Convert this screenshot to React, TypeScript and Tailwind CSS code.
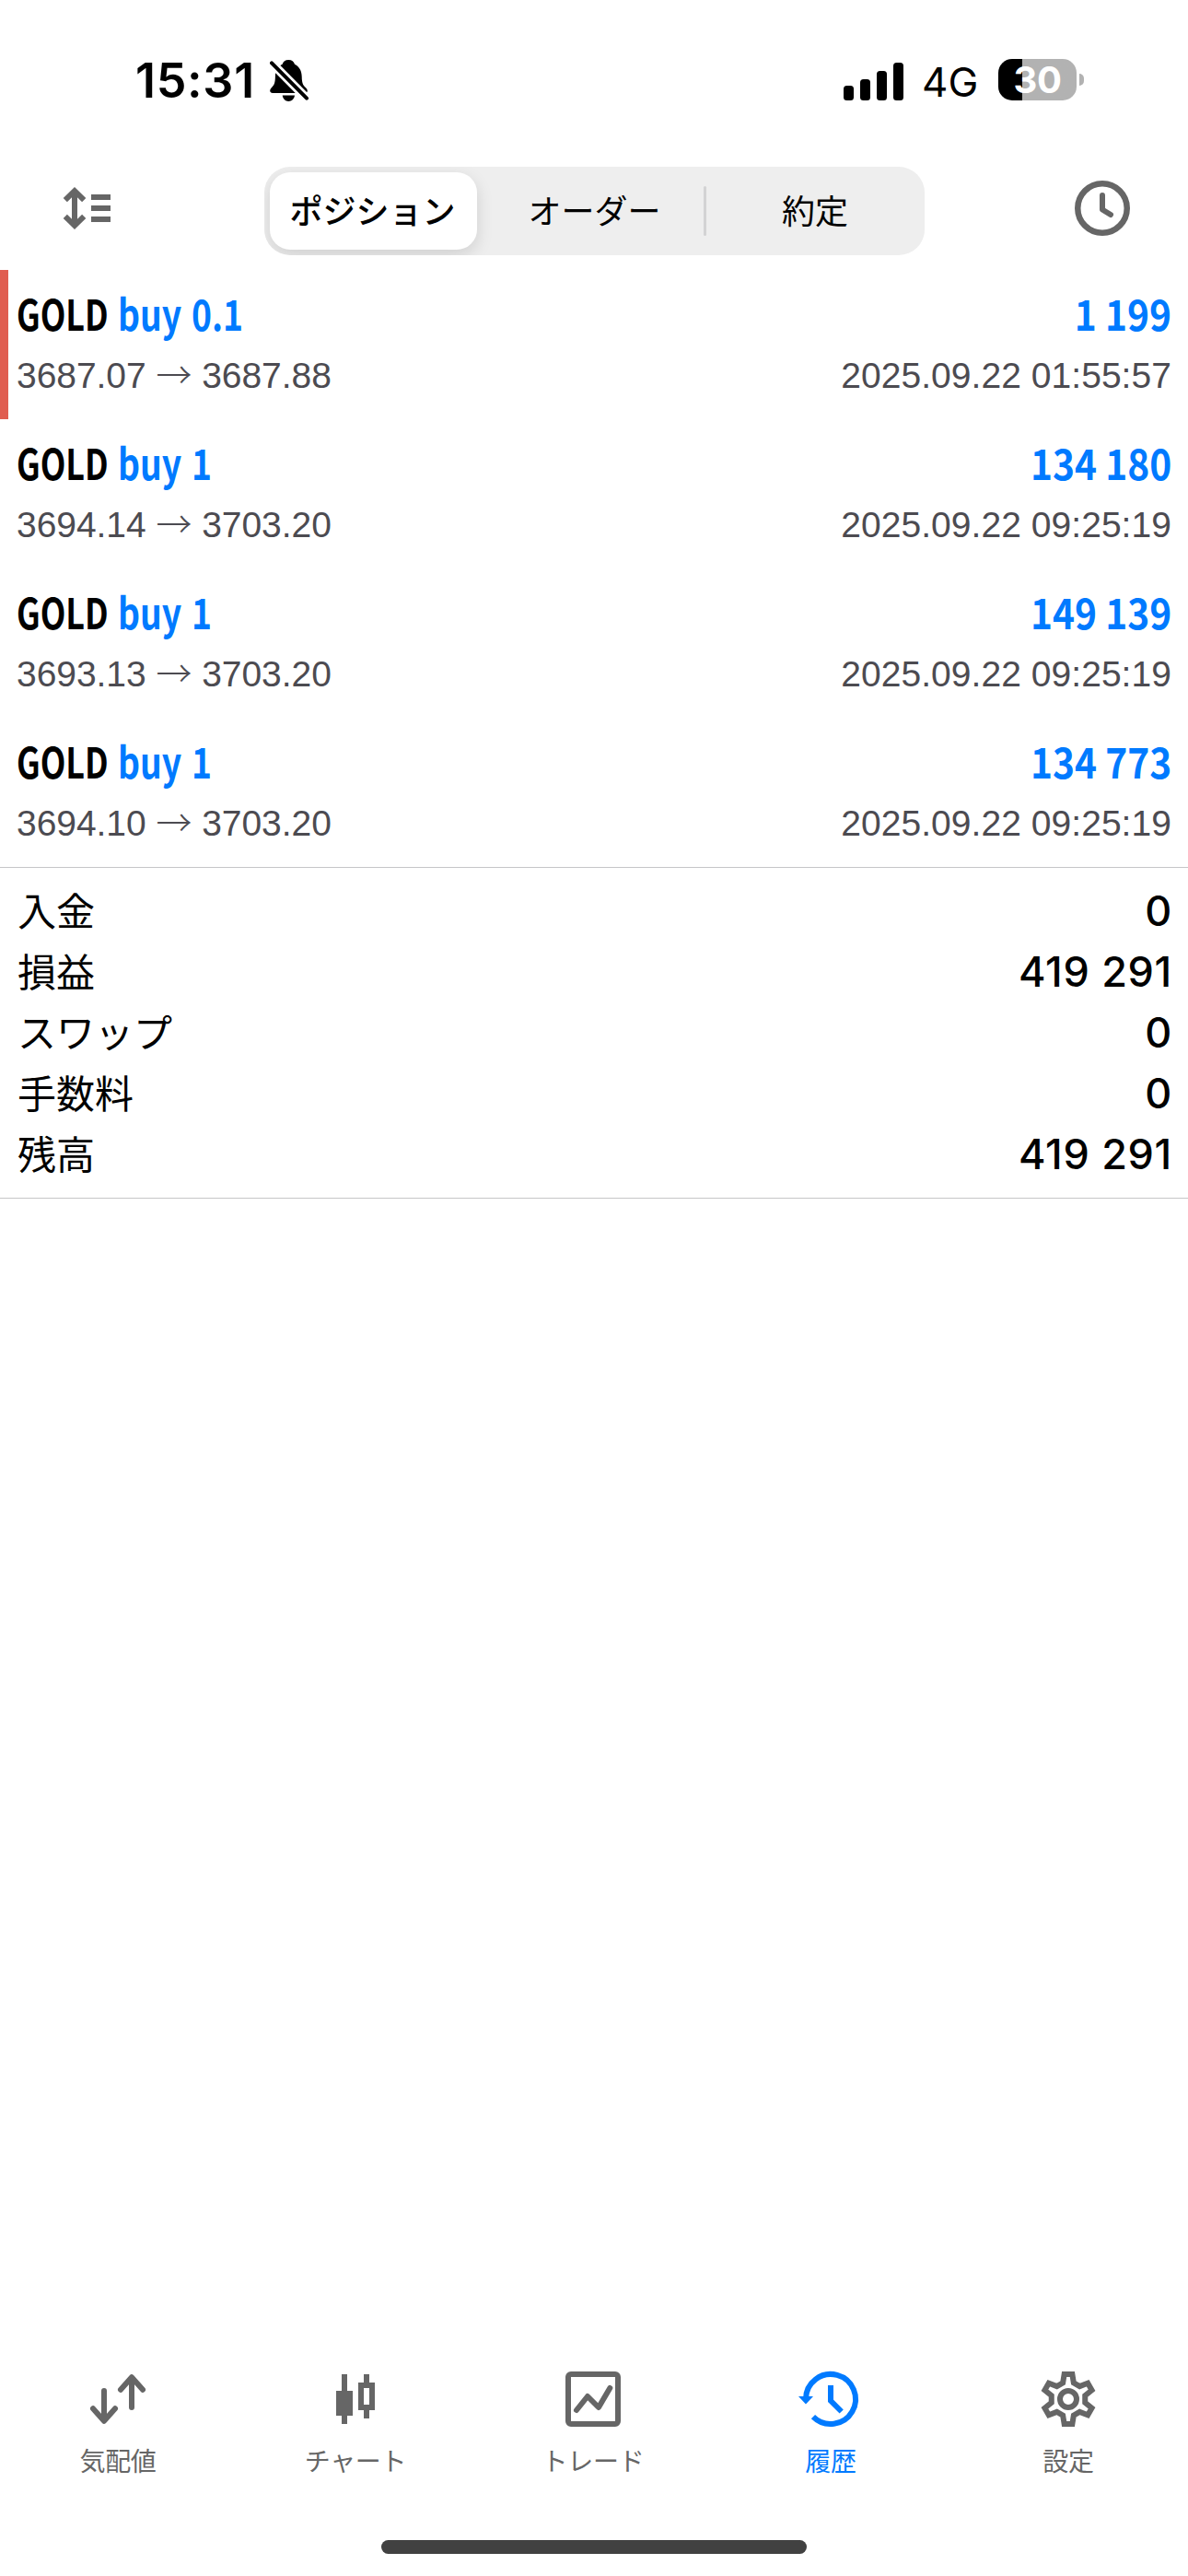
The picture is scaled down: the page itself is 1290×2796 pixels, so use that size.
import { useState, type ReactNode } from 'react';
import clsx from 'clsx';

interface Deal {
  symbol: string;
  side: string;
  open: string;
  close: string;
  profit: string;
  time: string;
  marked?: boolean;
}

interface Tab {
  id: string;
  label: string;
  icon: ReactNode;
}

const deals: Deal[] = [
  { symbol: 'GOLD', side: 'buy 0.1', open: '3687.07', close: '3687.88', profit: '1 199', time: '2025.09.22 01:55:57', marked: true },
  { symbol: 'GOLD', side: 'buy 1', open: '3694.14', close: '3703.20', profit: '134 180', time: '2025.09.22 09:25:19' },
  { symbol: 'GOLD', side: 'buy 1', open: '3693.13', close: '3703.20', profit: '149 139', time: '2025.09.22 09:25:19' },
  { symbol: 'GOLD', side: 'buy 1', open: '3694.10', close: '3703.20', profit: '134 773', time: '2025.09.22 09:25:19' },
];

const summary = [
  { label: '入金', value: '0' },
  { label: '損益', value: '419 291' },
  { label: 'スワップ', value: '0' },
  { label: '手数料', value: '0' },
  { label: '残高', value: '419 291' },
];

const segments = ['ポジション', 'オーダー', '約定'];

// One gear tooth around the origin, repeated every 60 degrees
const tooth = [[-1.95, -5.9], [-1.45, -9], [1.45, -9], [1.95, -5.9]];
const gearPoints = [0, 60, 120, 180, 240, 300]
  .flatMap((deg) => {
    const a = (deg * Math.PI) / 180;
    return tooth.map(([x, y]) => {
      const px = 12 + x * Math.cos(a) - y * Math.sin(a);
      const py = 12 + x * Math.sin(a) + y * Math.cos(a);
      return `${px.toFixed(2)},${py.toFixed(2)}`;
    });
  })
  .join(' ');

const tabs: Tab[] = [
  {
    id: 'quotes',
    label: '気配値',
    icon: (
      <g strokeLinecap="round" strokeLinejoin="round">
        <path d="M7 9V19.8M3 15.4L7 19.9L11 15.4" />
        <path d="M17 15V4.2M13 8.6L17 4.1L21 8.6" />
      </g>
    ),
  },
  {
    id: 'chart',
    label: 'チャート',
    icon: (
      <g fill="currentColor" stroke="none">
        <path d="M7 3H9V9H11V18H9V21H7V18H5V9H7Z" />
        <path fillRule="evenodd" d="M15 3H17V6H19V16H17V19H15V16H13V6H15ZM15 8V14H17V8Z" />
      </g>
    ),
  },
  {
    id: 'trade',
    label: 'トレード',
    icon: (
      <>
        <rect x="3" y="3" width="18" height="18" rx="1" />
        <path d="M6 16L10 11L14 15L18.1 8" strokeLinecap="round" strokeLinejoin="round" />
      </>
    ),
  },
  {
    id: 'history',
    label: '履歴',
    icon: (
      <>
        <path d="M3 12A9 9 0 1 1 5.64 18.36" />
        <path d="M0.33 11H5.67L3 13.8Z" fill="currentColor" stroke="none" />
        <path d="M12 7V12.6L15.9 16.5" />
      </>
    ),
  },
  {
    id: 'settings',
    label: '設定',
    icon: (
      <>
        <polygon points={gearPoints} />
        <circle cx="12" cy="12" r="3" />
      </>
    ),
  },
];

function StatusBar() {
  return (
    <div className="flex h-[181px] items-center pb-[5px] pl-[147px] pr-[113px] font-['Inter',sans-serif] text-black">
      <span className="w-[146px] text-[52px] leading-[60px] font-semibold tracking-[0.7px]">15:31</span>
      <svg className="h-[46px] w-[43px]" viewBox="0 0 43 46" fill="none">
        <path
          d="M20.3 0C16.6 0 14.6 2 13.6 4.8C8.6 7.4 6 12 5.9 18C5.8 25 4.6 27.4 2 30C.6 31.4.2 32.6.2 33.6C.2 35.2 1.4 36 3 36H38C39.8 36 40.8 35 40.8 33.6C40.8 32.6 40.3 31.4 38.8 30C36 27.4 34.8 25 34.7 18C34.6 12 32 7.4 27 4.8C26 2 24 0 20.3 0Z"
          fill="currentColor"
        />
        <path d="M13.7 38.6H27C26.4 42.6 23.6 45 20.3 45C17 45 14.3 42.6 13.7 38.6Z" fill="currentColor" />
        <path d="M-1 0.3L43 44.7" stroke="white" strokeWidth="9.5" />
        <path d="M2 3.3L40 41.7" stroke="currentColor" strokeWidth="4" strokeLinecap="round" />
      </svg>
      <div className="ml-auto flex h-[41px] items-end gap-[7px]">
        <div className="h-[16px] w-[11px] rounded-[3.5px] bg-black" />
        <div className="h-[23px] w-[11px] rounded-[3.5px] bg-black" />
        <div className="h-[32px] w-[11px] rounded-[3.5px] bg-black" />
        <div className="h-[41px] w-[11px] rounded-[3.5px] bg-black" />
      </div>
      <span className="ml-[20px] w-[83px] pt-[2px] text-[44px] leading-[56px] font-normal">4G</span>
      <div className="mb-[3px] flex items-center gap-[3px]">
        <div className="h-[45px] w-[85px] rounded-[15px] bg-linear-to-r from-black from-31% to-[#b2b2b2] to-31% text-center text-[40px] leading-[45px] font-bold tracking-[-0.5px] text-white">
          30
        </div>
        <div className="h-[13px] w-[5px] rounded-r-[5px] bg-[#b2b2b2]" />
      </div>
    </div>
  );
}

export default function App() {
  const [segment, setSegment] = useState(0);
  const [activeTab, setActiveTab] = useState('history');

  return (
    <div className="flex h-[2796px] w-[1290px] flex-col overflow-hidden bg-white font-['Liberation_Sans','Noto_Sans_CJK_JP',sans-serif] text-black">
      <StatusBar />

      {/* Toolbar */}
      <header className="flex h-[96px] items-center font-['Noto_Sans_CJK_JP',sans-serif]">
        <button className="mb-[6px] w-[287px] pl-[66px] text-[#666]">
          <svg className="h-[48px] w-[57px]" viewBox="0 0 57 48" fill="none" stroke="currentColor" strokeWidth="6">
            <path d="M15 4V44M4.8 15.1L15 5.1L25.2 15.1M4.8 32.9L15 42.9L25.2 32.9" />
            <path d="M33 12H54M33 24H54M33 36H54" />
          </svg>
        </button>
        <div className="flex h-[96px] w-[717px] items-center overflow-hidden rounded-[28px] bg-[#eeeeee] px-[6px]">
          {segments.map((name, i) => (
            <div key={name} className="flex items-center">
              {i === 2 && <div className="h-[54px] w-[3px] rounded-full bg-[#d3d3d4]" />}
              <button
                onClick={() => setSegment(i)}
                className={clsx(
                  'h-[84px] pb-[4px] text-[36px] leading-[80px]',
                  i === 0 && 'w-[225px] pr-[2px]',
                  i === 1 && 'w-[246px] pl-[9px]',
                  i === 2 && 'w-[230px] pl-[6px]',
                  segment === i
                    ? 'rounded-[22px] bg-white font-medium shadow-[0_6px_18px_rgba(0,0,0,0.13)]'
                    : 'font-normal'
                )}
              >
                {name}
              </button>
            </div>
          ))}
        </div>
        <button className="mb-[6px] ml-[163px] text-[#666]">
          <svg className="size-[60px]" viewBox="0 0 60 60" fill="none" stroke="currentColor" strokeLinecap="round" strokeLinejoin="round">
            <circle cx="30" cy="30" r="26.75" strokeWidth="6.5" />
            <path d="M30 16V31.5L39 37" strokeWidth="6" />
          </svg>
        </button>
      </header>

      {/* Closed positions */}
      <ul className="mt-4">
        {deals.map((deal, i) => (
          <li
            key={i}
            className={clsx(
              'flex h-[162px] flex-col border-l-[9px] pt-[16px] pr-[18px] pl-[9px]',
              deal.marked ? 'border-[#e05d50]' : 'border-transparent'
            )}
          >
            <div className="flex h-[60px] font-['Noto_Sans_CJK_JP',sans-serif] text-[46px] leading-[60px] font-bold">
              <span className="w-[110px] origin-left scale-x-[0.78]">{deal.symbol}</span>
              <span className="origin-left scale-x-[0.81] whitespace-pre text-[#007aff] [word-spacing:3px]">{deal.side}</span>
              <span className="ml-auto origin-right scale-x-[0.885] text-[#007aff]">{deal.profit}</span>
            </div>
            <div className="mt-[9px] flex h-[60px] justify-between text-[39px] leading-[60px] text-[#4c4b51]">
              <span className="tracking-[-0.05px]">
                {deal.open} <span className="font-['Noto_Sans_CJK_JP'] leading-none font-light">→</span> {deal.close}
              </span>
              <span className="tracking-[0.05px]">{deal.time}</span>
            </div>
          </li>
        ))}
      </ul>

      {/* Totals */}
      <dl className="border-y border-[#c6c6c8] py-[14px] pr-[17px] pl-[19px]">
        {summary.map((row) => (
          <div key={row.label} className="flex h-[66px] items-center justify-between">
            <dt className="pb-[4px] font-['Noto_Sans_CJK_JP',sans-serif] text-[42px] leading-[62px]">{row.label}</dt>
            <dd className="font-['Inter',sans-serif] text-[45px] leading-[66px] font-medium tracking-[0.7px]">{row.value}</dd>
          </div>
        ))}
      </dl>

      {/* Tab bar */}
      <nav className="mt-auto -ml-px grid h-[189px] w-[1290px] grid-cols-5">
        {tabs.map((tab) => (
          <button
            key={tab.id}
            onClick={() => setActiveTab(tab.id)}
            className={clsx(
              'flex flex-col items-center',
              activeTab === tab.id ? 'text-[#007aff]' : 'text-[#666]'
            )}
          >
            <svg className="size-[72px]" viewBox="0 0 24 24" fill="none" stroke="currentColor" strokeWidth="2">
              {tab.icon}
            </svg>
            <span className="mt-[10px] font-['Noto_Sans_CJK_JP',sans-serif] text-[28px] leading-[40px] tracking-[-0.3px]">
              {tab.label}
            </span>
          </button>
        ))}
      </nav>
      <div className="mx-auto mb-[24px] h-[15px] w-[462px] shrink-0 rounded-full bg-[#414141]" />
    </div>
  );
}
